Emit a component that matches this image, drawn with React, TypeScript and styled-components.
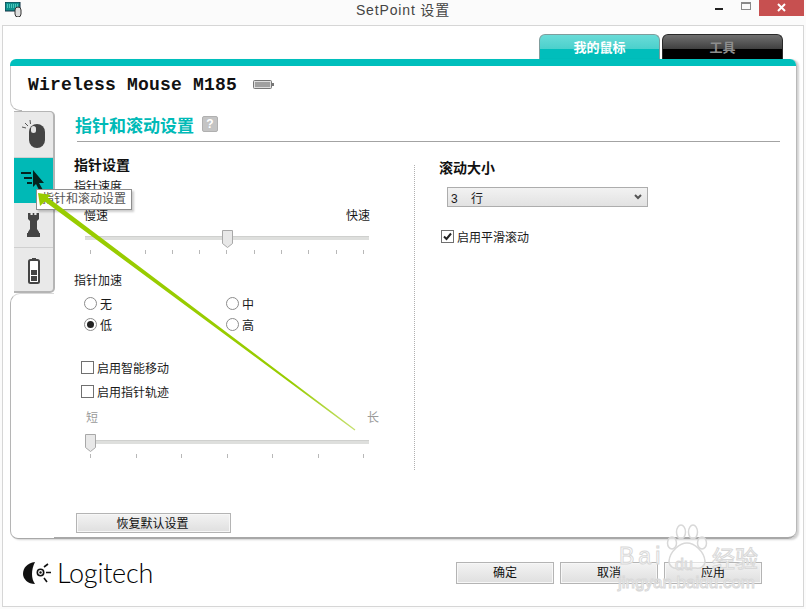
import styled, { createGlobalStyle } from "styled-components";

const CJK = `"Liberation Sans", "Noto Sans CJK SC", sans-serif`;

const GlobalStyle = createGlobalStyle`
  html, body {
    margin: 0;
    padding: 0;
    background: #fbfbfb;
  }
  body {
    font-family: ${CJK};
    font-size: 12px;
    color: #1a1a1a;
  }
`;

const Page = styled.div`
  position: relative;
  width: 806px;
  height: 609px;
  overflow: hidden;
  background: #fbfbfb;
`;

const TitleBar = styled.div`
  display: grid;
  grid-template-columns: 1fr auto 1fr;
  height: 25px;
`;

const AppIcon = styled.div`
  padding: 2px 0 0 5px;
`;

const WindowTitle = styled.div`
  font-size: 14px;
  line-height: 21px;
  color: #444;
  letter-spacing: 0.85px;
`;

const WindowControls = styled.div`
  display: flex;
  justify-content: flex-end;
  align-items: flex-start;
  padding-right: 2px;
`;

const MinimizeButton = styled.div`
  width: 8px;
  height: 2px;
  margin: 8px 18px 0 0;
  background: #222;
`;

const MaximizeButton = styled.div`
  width: 8px;
  height: 5px;
  margin: 2px 8px 0 0;
  border: 1px solid #8a8a8a;
  border-top-width: 2px;
`;

const CloseButton = styled.div`
  display: flex;
  justify-content: center;
  width: 45px;
  height: 16px;
  padding-top: 3px;
  box-sizing: border-box;
  background: #c75050;
`;

const Client = styled.div`
  display: flex;
  flex-direction: column;
  box-sizing: border-box;
  height: 582px;
  margin: 0 2px;
  padding: 8px 6px 0 7px;
  background: #fff;
  border: 1px solid #d6d6d6;
`;

const TopTabs = styled.div`
  display: flex;
  justify-content: flex-end;
  gap: 2px;
  height: 25px;
  padding-right: 14px;
`;

const TopTab = styled.div<{ $active?: boolean }>`
  box-sizing: border-box;
  width: 121px;
  height: 25px;
  border: 1px solid ${(p) => (p.$active ? "#7f9d9d" : "#2a2a2a")};
  border-bottom: 0;
  border-radius: 6px 6px 0 0;
  font-size: 13px;
  font-weight: 700;
  line-height: 25px;
  text-align: center;
  color: ${(p) => (p.$active ? "#fff" : "#8e8e8e")};
  background: ${(p) =>
    p.$active
      ? "linear-gradient(#6adcd8 0, #4bd0cc 14px, #00bebb 14px)"
      : "linear-gradient(#707070 0, #404040 14px, #000 14px)"};
`;

const Card = styled.div`
  display: flex;
  flex-direction: column;
  height: 480px;
  border-right: 1px solid #b9b9b9;
  border-radius: 6px 6px 8px 8px;
  box-shadow: 2px 1px 2px rgba(0, 0, 0, 0.18);
`;

const CardStrip = styled.div`
  height: 7px;
  background: #00bfbc;
  border-radius: 6px 6px 0 0;
`;

const DeviceHeader = styled.div`
  position: relative;
  display: flex;
  align-items: center;
  gap: 16px;
  box-sizing: border-box;
  height: 45px;
  padding: 0 0 8px 18px;
  background: #fff;

  &::before {
    content: "";
    position: absolute;
    left: 0;
    top: 0;
    bottom: 0;
    width: 12px;
    box-sizing: border-box;
    border-left: 1px solid #c8c8c8;
    border-bottom: 1px solid #b5b5b5;
    border-bottom-left-radius: 10px;
  }
`;

const DeviceName = styled.div`
  font-family: "Liberation Mono", monospace;
  font-size: 18px;
  font-weight: 700;
  letter-spacing: 0.2px;
  color: #111;
`;

const CardBody = styled.div`
  display: flex;
  flex: 1;
  min-height: 0;
`;

const LeftRail = styled.div`
  display: flex;
  flex-direction: column;
  width: 44px;
  flex: none;
`;

const SideTabs = styled.div`
  display: flex;
  flex-direction: column;
  box-sizing: border-box;
  width: 41px;
  height: 182px;
  margin-left: 4px;
  padding-top: 1px;
  background: #e9e9e9;
  border-radius: 0 5px 5px 0;
  border-right: 2px solid #b5b5b5;
  border-bottom: 2px solid #b5b5b5;
  border-top: 1px solid #b5b5b5;
`;

const SideTab = styled.div<{ $active?: boolean; $divided?: boolean }>`
  display: flex;
  align-items: center;
  justify-content: center;
  height: 45px;
  flex: none;
  box-sizing: border-box;
  background: ${(p) => (p.$active ? "#00b9b6" : "transparent")};
  border-bottom: ${(p) => (p.$divided ? "1px solid #cfcfcf" : "0")};
`;

const RailRest = styled.div`
  flex: 1;
  border-left: 1px solid #b5b5b5;
  border-top: 1px solid #d8d8d8;
  border-bottom: 1px solid #a8a8a8;
  border-radius: 10px 0 0 8px;
`;

const Main = styled.div`
  flex: 1;
  min-width: 0;
  padding-left: 20px;
  border-bottom: 2px solid #a8a8a8;
  border-bottom-right-radius: 8px;
`;

const TitleRow = styled.div`
  display: flex;
  align-items: center;
  gap: 8px;
  box-sizing: border-box;
  height: 30px;
  padding: 0 0 4px 1px;
`;

const PageTitle = styled.div`
  font-size: 17px;
  font-weight: 700;
  color: #00bab7;
`;

const HelpBadge = styled.div`
  width: 16px;
  height: 16px;
  border-radius: 2px;
  background: #c4c4c4;
  border: 1px solid #b0b0b0;
  box-sizing: border-box;
  color: #fff;
  font-size: 12px;
  font-weight: 700;
  line-height: 14px;
  text-align: center;
`;

const Rule = styled.div`
  height: 1px;
  margin: 0 16px 0 3px;
  background: #a3a3a3;
`;

const Columns = styled.div`
  display: flex;
  padding-top: 14px;
`;

const LeftColumn = styled.div`
  display: flex;
  flex-direction: column;
  align-items: flex-start;
  width: 340px;
  flex: none;
`;

const Divider = styled.div`
  width: 0;
  height: 305px;
  margin-top: 9px;
  border-left: 1px dotted #b0b0b0;
`;

const RightColumn = styled.div`
  display: flex;
  flex-direction: column;
  align-items: flex-start;
  padding-left: 24px;
`;

const SectionTitle = styled.div<{ $top?: number }>`
  height: 18px;
  margin-top: ${(p) => p.$top ?? 0}px;
  font-size: 14px;
  font-weight: 700;
  line-height: 18px;
  color: #111;
`;

const FieldLabel = styled.div<{ $top: number }>`
  height: 16px;
  margin-top: ${(p) => p.$top}px;
  line-height: 16px;
`;

const RangeLabels = styled.div<{ $top: number; $left: number; $width: number; $muted?: boolean }>`
  display: flex;
  justify-content: space-between;
  width: ${(p) => p.$width}px;
  height: 16px;
  margin: ${(p) => p.$top}px 0 0 ${(p) => p.$left}px;
  line-height: 16px;
  color: ${(p) => (p.$muted ? "#9a9a9a" : "#1a1a1a")};
`;

const SliderBox = styled.div<{ $top: number }>`
  position: relative;
  width: 284px;
  margin: ${(p) => p.$top}px 0 0 11px;
`;

const SliderTrack = styled.div`
  height: 4px;
  margin-top: 6px;
  background: #dedfdd;
  border-top: 1px solid #cfd0ce;
  box-sizing: border-box;
`;

const SliderThumb = styled.div<{ $at: number }>`
  position: absolute;
  top: 0;
  left: ${(p) => 5 + p.$at * 274 - 5.5}px;
  line-height: 0;
`;

const Ticks = styled.div`
  display: flex;
  justify-content: space-between;
  margin-top: 10px;
  padding: 0 5px;
`;

const Tick = styled.div`
  width: 1px;
  height: 4px;
  background: #b8b8b8;
`;

const RadioGrid = styled.div`
  display: grid;
  grid-template-columns: 142px 142px;
  grid-auto-rows: 21px;
  margin: 4px 0 0 10px;
`;

const RadioRow = styled.div`
  display: flex;
  align-items: center;
  gap: 3px;
`;

const RadioMark = styled.span<{ $checked?: boolean }>`
  display: flex;
  align-items: center;
  justify-content: center;
  box-sizing: border-box;
  width: 13px;
  height: 13px;
  border: 1px solid #8c8c8c;
  border-radius: 50%;
  background: #fff;

  &::after {
    content: "";
    display: ${(p) => (p.$checked ? "block" : "none")};
    width: 7px;
    height: 7px;
    border-radius: 50%;
    background: #222;
  }
`;

const CheckRow = styled.div<{ $top: number; $left: number }>`
  display: flex;
  align-items: center;
  gap: 3px;
  height: 16px;
  margin: ${(p) => p.$top}px 0 0 ${(p) => p.$left}px;
`;

const CheckMark = styled.span`
  display: flex;
  align-items: center;
  justify-content: center;
  box-sizing: border-box;
  width: 13px;
  height: 13px;
  border: 1px solid #707070;
  background: #fff;
`;

const PlainButton = styled.div<{ $width: number; $height: number }>`
  box-sizing: border-box;
  width: ${(p) => p.$width}px;
  height: ${(p) => p.$height}px;
  border: 1px solid #b4b4b4;
  background: linear-gradient(#f3f3f3, #dfdfdf);
  box-shadow: inset 0 0 0 1px #f7f7f7;
  line-height: ${(p) => p.$height - 2}px;
  text-align: center;
  color: #111;
`;

const ResetButton = styled(PlainButton)`
  margin: 55px 0 0 2px;
  padding: 1px 2px 0 0;
`;

const SelectBox = styled.div`
  display: flex;
  align-items: center;
  justify-content: space-between;
  box-sizing: border-box;
  width: 201px;
  height: 20px;
  margin: 10px 0 0 8px;
  padding: 0 5px 0 3px;
  border: 1px solid #adadad;
  background: linear-gradient(#f2f2f2, #e2e2e2);
  white-space: pre;
`;

const Footer = styled.div`
  display: flex;
  align-items: center;
  justify-content: space-between;
  flex: 1;
  padding: 0 35px 0 12px;
`;

const Logo = styled.div`
  display: flex;
  align-items: center;
  gap: 5px;
`;

const LogoWord = styled.div`
  font-family: Lato, sans-serif;
  font-size: 27px;
  font-weight: 300;
  letter-spacing: -0.25px;
  line-height: 26px;
  color: #000;
`;

const FooterButtons = styled.div`
  display: flex;
  gap: 6px;
`;

const Tooltip = styled.div`
  position: absolute;
  left: 36px;
  top: 189px;
  box-sizing: border-box;
  width: 96px;
  height: 21px;
  border: 1px solid #8e8e8e;
  background: #fff;
  box-shadow: 2px 2px 2px rgba(0, 0, 0, 0.2);
  color: #555;
  line-height: 19px;
  text-align: center;
`;

const ArrowLayer = styled.svg`
  position: absolute;
  left: 0;
  top: 0;
  pointer-events: none;
`;

const Watermark = styled.div`
  position: absolute;
  left: 618px;
  top: 523px;
  width: 150px;
  height: 70px;
  color: rgba(255, 255, 255, 0.8);
  -webkit-text-stroke: 1px #d8d8d8;
  pointer-events: none;
`;

const WatermarkBrand = styled.div`
  position: absolute;
  left: 1px;
  top: 20px;
  font-family: "Liberation Sans", sans-serif;
  font-size: 23px;
  letter-spacing: 4px;
  line-height: 26px;
`;

const WatermarkDu = styled.div`
  position: absolute;
  left: 57px;
  top: 33px;
  font-family: "Liberation Sans", sans-serif;
  font-size: 16px;
  line-height: 18px;
`;

const WatermarkCn = styled.div`
  position: absolute;
  left: 94px;
  top: 19px;
  font-family: "Noto Sans CJK SC", sans-serif;
  font-size: 23px;
  line-height: 30px;
`;

const WatermarkUrl = styled.div`
  position: absolute;
  left: 0;
  top: 50px;
  font-family: "Liberation Sans", sans-serif;
  font-size: 17px;
  line-height: 20px;
  white-space: nowrap;
`;

const PawLayer = styled.svg`
  position: absolute;
  left: 48px;
  top: 0;
`;

const Slider = ({ top, at, ticks }: { top: number; at: number; ticks: number }) => (
  <SliderBox $top={top}>
    <SliderTrack />
    <Ticks>
      {Array.from({ length: ticks }, (_, i) => (
        <Tick key={i} />
      ))}
    </Ticks>
    <SliderThumb $at={at}>
      <svg width="11" height="18" viewBox="0 0 11 18">
        <path d="M.5.5h10v13l-5 4-5-4z" fill="#e8e8e8" stroke="#a8a8a8" />
      </svg>
    </SliderThumb>
  </SliderBox>
);

const Radio = ({ label, checked }: { label: string; checked?: boolean }) => (
  <RadioRow>
    <RadioMark $checked={checked} />
    {label}
  </RadioRow>
);

const App = () => {
  return (
    <Page>
      <GlobalStyle />
      <TitleBar>
        <AppIcon>
          <svg width="17" height="15" viewBox="0 0 17 15">
            <rect x="0" y="0" width="15" height="9" fill="#0e8f8c" stroke="#134" strokeWidth="1" />
            <path d="M2 3h11M2 5h11" stroke="#8fe" strokeDasharray="1 1" />
            <rect x="10" y="5" width="6" height="10" rx="3" fill="#ddd" stroke="#333" />
          </svg>
        </AppIcon>
        <WindowTitle>SetPoint 设置</WindowTitle>
        <WindowControls>
          <MinimizeButton />
          <MaximizeButton />
          <CloseButton>
            <svg width="9" height="9" viewBox="0 0 9 9">
              <path d="M1 1l7 7M8 1l-7 7" stroke="#fff" strokeWidth="2" />
            </svg>
          </CloseButton>
        </WindowControls>
      </TitleBar>

      <Client>
        <TopTabs>
          <TopTab $active>我的鼠标</TopTab>
          <TopTab>工具</TopTab>
        </TopTabs>

        <Card>
          <CardStrip />
          <DeviceHeader>
            <DeviceName>Wireless Mouse M185</DeviceName>
            <svg width="21" height="9" viewBox="0 0 21 9">
              <rect x=".5" y=".5" width="18" height="8" rx="1" fill="#ddd" stroke="#777" />
              <rect x="2" y="2" width="15" height="5" fill="#a0a0a0" />
              <rect x="19" y="3" width="2" height="3" fill="#777" />
            </svg>
          </DeviceHeader>

          <CardBody>
            <LeftRail>
              <SideTabs>
                <SideTab $divided>
                  <svg width="24" height="30" viewBox="0 0 24 30">
                    <path d="M3 3l3 3M0 7l4 1M8 0l.5 4" stroke="#555" strokeWidth="1" />
                    <rect x="7" y="4" width="16" height="24" rx="8" fill="#444" />
                    <rect x="9" y="6" width="5" height="7" rx="2.5" fill="#fff" opacity="0.85" />
                  </svg>
                </SideTab>
                <SideTab $active>
                  <svg width="25" height="22" viewBox="0 0 25 22">
                    <path d="M12 0l11 13h-5l4 7-3 2-4-8-3 3z" fill="#04231f" />
                    <path d="M0 3h10M3 8h8M6 13h5" stroke="#04231f" strokeWidth="2" />
                  </svg>
                </SideTab>
                <SideTab $divided>
                  <svg width="15" height="24" viewBox="0 0 15 24">
                    <path
                      d="M2 0h2.5v2h2.2V0h1.6v2h2.2V0H13v6l-2 2v8l2 3v1h1v4H1v-4h1v-1l2-3V8L2 6z"
                      fill="#444"
                    />
                  </svg>
                </SideTab>
                <SideTab>
                  <svg width="12" height="26" viewBox="0 0 12 26">
                    <rect x="4" y="0" width="4" height="2" fill="#444" />
                    <rect x="1" y="2" width="10" height="23" rx="1.5" fill="#fff" stroke="#444" strokeWidth="2" />
                    <rect x="3" y="12" width="6" height="5" fill="#444" />
                    <rect x="3" y="18" width="6" height="5" fill="#444" />
                  </svg>
                </SideTab>
              </SideTabs>
              <RailRest />
            </LeftRail>

            <Main>
              <TitleRow>
                <PageTitle>指针和滚动设置</PageTitle>
                <HelpBadge>?</HelpBadge>
              </TitleRow>
              <Rule />
              <Columns>
                <LeftColumn>
                  <SectionTitle>指针设置</SectionTitle>
                  <FieldLabel $top={5}>指针速度</FieldLabel>
                  <RangeLabels $top={13} $left={10} $width={286}>
                    <span>慢速</span>
                    <span>快速</span>
                  </RangeLabels>
                  <Slider top={6} at={0.5} ticks={11} />
                  <FieldLabel $top={19}>指针加速</FieldLabel>
                  <RadioGrid>
                    <Radio label="无" />
                    <Radio label="中" />
                    <Radio label="低" checked />
                    <Radio label="高" />
                  </RadioGrid>
                  <CheckRow $top={24} $left={7}>
                    <CheckMark />
                    启用智能移动
                  </CheckRow>
                  <CheckRow $top={8} $left={7}>
                    <CheckMark />
                    启用指针轨迹
                  </CheckRow>
                  <RangeLabels $top={11} $left={12} $width={293} $muted>
                    <span>短</span>
                    <span>长</span>
                  </RangeLabels>
                  <Slider top={8} at={0} ticks={7} />
                  <ResetButton $width={155} $height={20}>
                    恢复默认设置
                  </ResetButton>
                </LeftColumn>

                <Divider />

                <RightColumn>
                  <SectionTitle $top={3}>滚动大小</SectionTitle>
                  <SelectBox>
                    <span>3    行</span>
                    <svg width="8" height="6" viewBox="0 0 8 6">
                      <path d="M1 1l3 3 3-3" fill="none" stroke="#555" strokeWidth="2" />
                    </svg>
                  </SelectBox>
                  <CheckRow $top={21} $left={2}>
                    <CheckMark>
                      <svg width="11" height="11" viewBox="0 0 11 11">
                        <path d="M2 5.5l2.5 2.5L9 2.5" fill="none" stroke="#222" strokeWidth="2" />
                      </svg>
                    </CheckMark>
                    启用平滑滚动
                  </CheckRow>
                </RightColumn>
              </Columns>
            </Main>
          </CardBody>
        </Card>

        <Footer>
          <Logo>
            <svg width="30" height="24" viewBox="0 0 30 24">
              <path d="M13 1C5 2 1 7 1 13c0 5 5 10 12 10-2-3-3-6-3-10s1-8 3-12z" fill="#111" />
              <circle cx="18.5" cy="11.5" r="3.2" fill="none" stroke="#111" strokeWidth="1.6" />
              <circle cx="18.5" cy="11.5" r="1.2" fill="#111" />
              <path d="M24 11.5h5M22 6l4-3M22 17l3 4" stroke="#111" strokeWidth="1.6" />
            </svg>
            <LogoWord>Logitech</LogoWord>
          </Logo>
          <FooterButtons>
            <PlainButton $width={98} $height={22}>确定</PlainButton>
            <PlainButton $width={98} $height={22}>取消</PlainButton>
            <PlainButton $width={98} $height={22}>应用</PlainButton>
          </FooterButtons>
        </Footer>
      </Client>

      <Tooltip>指针和滚动设置</Tooltip>

      <ArrowLayer width="806" height="609" viewBox="0 0 806 609">
        <defs>
          <linearGradient id="arrowFade" gradientUnits="userSpaceOnUse" x1="38" y1="193" x2="355" y2="430">
            <stop offset="0.8" stopColor="#98cc00" />
            <stop offset="1" stopColor="#c6e070" />
          </linearGradient>
        </defs>
        <polygon
          points="38,193 51,195 47.8,197.5 355.4,429.6 354.6,430.4 44.8,201.5 40,206"
          fill="url(#arrowFade)"
        />
      </ArrowLayer>

      <Watermark>
        <PawLayer width="42" height="48" viewBox="0 0 42 48">
          <g fill="rgba(255,255,255,0.6)" stroke="#d8d8d8" strokeWidth="1.5">
            <ellipse cx="6" cy="20" rx="4.5" ry="6" />
            <ellipse cx="15" cy="9" rx="4.5" ry="7" />
            <ellipse cx="27" cy="9" rx="4.5" ry="7" />
            <ellipse cx="36" cy="20" rx="4.5" ry="6" />
            <path d="M21 20c-7 0-17 8-18 18 0 6 5 8 9 7h18c4 1 9-1 9-7-1-10-11-18-18-18z" />
          </g>
        </PawLayer>
        <WatermarkBrand>Bai</WatermarkBrand>
        <WatermarkDu>du</WatermarkDu>
        <WatermarkCn>经验</WatermarkCn>
        <WatermarkUrl>jingyan.baidu.com</WatermarkUrl>
      </Watermark>
    </Page>
  );
};

export default App;
